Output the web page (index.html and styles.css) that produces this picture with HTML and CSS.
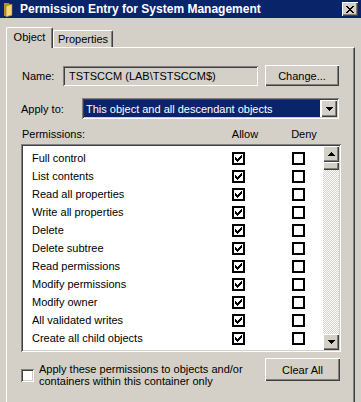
FILE: index.html
```html
<!DOCTYPE html>
<html>
<head>
<meta charset="utf-8">
<title>Permission Entry for System Management</title>
<link rel="stylesheet" href="styles.css">
</head>
<body>
<div class="win">
  <div class="titlebar">
    <svg class="ticon" width="12" height="15" viewBox="0 0 12 15">
      <path d="M1 1h5l1 2h2v11H1z" fill="#b8902c"/>
      <path d="M3 4l6-2v11l-6 2z" fill="#f4d878" stroke="#9a7420" stroke-width="0.6"/>
    </svg>
    <span class="ttext">Permission Entry for System Management</span>
    <div class="close">
      <svg width="8" height="7" viewBox="0 0 8 7" shape-rendering="crispEdges"><path d="M0 0h2v1H0z M6 0h2v1H6z M1 1h2v1H1z M5 1h2v1H5z M2 2h4v1H2z M3 3h2v1H3z M2 4h4v1H2z M1 5h2v1H1z M5 5h2v1H5z M0 6h2v1H0z M6 6h2v1H6z" fill="#000"/></svg>
    </div>
  </div>

  <div class="tabs">
    <div class="tab sel">Object</div>
    <div class="tab">Properties</div>
  </div>

  <div class="panel">
    <div class="name-row">
      <span class="name-lbl">Name:</span>
      <div class="field">TSTSCCM (LAB\TSTSCCM$)</div>
      <div class="btn change">Change...</div>
    </div>

    <div class="apply-row">
      <span class="apply-lbl">Apply to:</span>
      <div class="combo">
        <div class="combo-sel">This object and all descendant objects</div>
        <div class="combo-btn">
          <svg width="7" height="4" viewBox="0 0 7 4" shape-rendering="crispEdges"><path d="M0 0h7v1H0z M1 1h5v1H1z M2 2h3v1H2z M3 3h1v1H3z" fill="#000"/></svg>
        </div>
      </div>
    </div>

    <div class="perm-head">
      <span>Permissions:</span>
      <span class="ch">Allow</span>
      <span class="ch">Deny</span>
    </div>

    <div class="list">
      <div class="rows">
        <div class="prow"><span>Full control</span><svg class="cb" width="13" height="13" viewBox="0 0 13 13" shape-rendering="crispEdges"><rect x="1" y="1" width="11" height="11" fill="#fff" stroke="#000" stroke-width="2"/><path d="M9 3h1v1H9z M8 4h2v1H8z M3 5h1v1H3z M7 5h3v1H7z M3 6h2v1H3z M6 6h3v1H6z M3 7h5v1H3z M4 8h3v1H4z M5 9h1v1H5z" fill="#000"/></svg><svg class="cb" width="13" height="13" viewBox="0 0 13 13" shape-rendering="crispEdges"><rect x="1" y="1" width="11" height="11" fill="#fff" stroke="#000" stroke-width="2"/></svg></div>
        <div class="prow"><span>List contents</span><svg class="cb" width="13" height="13" viewBox="0 0 13 13" shape-rendering="crispEdges"><rect x="1" y="1" width="11" height="11" fill="#fff" stroke="#000" stroke-width="2"/><path d="M9 3h1v1H9z M8 4h2v1H8z M3 5h1v1H3z M7 5h3v1H7z M3 6h2v1H3z M6 6h3v1H6z M3 7h5v1H3z M4 8h3v1H4z M5 9h1v1H5z" fill="#000"/></svg><svg class="cb" width="13" height="13" viewBox="0 0 13 13" shape-rendering="crispEdges"><rect x="1" y="1" width="11" height="11" fill="#fff" stroke="#000" stroke-width="2"/></svg></div>
        <div class="prow"><span>Read all properties</span><svg class="cb" width="13" height="13" viewBox="0 0 13 13" shape-rendering="crispEdges"><rect x="1" y="1" width="11" height="11" fill="#fff" stroke="#000" stroke-width="2"/><path d="M9 3h1v1H9z M8 4h2v1H8z M3 5h1v1H3z M7 5h3v1H7z M3 6h2v1H3z M6 6h3v1H6z M3 7h5v1H3z M4 8h3v1H4z M5 9h1v1H5z" fill="#000"/></svg><svg class="cb" width="13" height="13" viewBox="0 0 13 13" shape-rendering="crispEdges"><rect x="1" y="1" width="11" height="11" fill="#fff" stroke="#000" stroke-width="2"/></svg></div>
        <div class="prow"><span>Write all properties</span><svg class="cb" width="13" height="13" viewBox="0 0 13 13" shape-rendering="crispEdges"><rect x="1" y="1" width="11" height="11" fill="#fff" stroke="#000" stroke-width="2"/><path d="M9 3h1v1H9z M8 4h2v1H8z M3 5h1v1H3z M7 5h3v1H7z M3 6h2v1H3z M6 6h3v1H6z M3 7h5v1H3z M4 8h3v1H4z M5 9h1v1H5z" fill="#000"/></svg><svg class="cb" width="13" height="13" viewBox="0 0 13 13" shape-rendering="crispEdges"><rect x="1" y="1" width="11" height="11" fill="#fff" stroke="#000" stroke-width="2"/></svg></div>
        <div class="prow"><span>Delete</span><svg class="cb" width="13" height="13" viewBox="0 0 13 13" shape-rendering="crispEdges"><rect x="1" y="1" width="11" height="11" fill="#fff" stroke="#000" stroke-width="2"/><path d="M9 3h1v1H9z M8 4h2v1H8z M3 5h1v1H3z M7 5h3v1H7z M3 6h2v1H3z M6 6h3v1H6z M3 7h5v1H3z M4 8h3v1H4z M5 9h1v1H5z" fill="#000"/></svg><svg class="cb" width="13" height="13" viewBox="0 0 13 13" shape-rendering="crispEdges"><rect x="1" y="1" width="11" height="11" fill="#fff" stroke="#000" stroke-width="2"/></svg></div>
        <div class="prow"><span>Delete subtree</span><svg class="cb" width="13" height="13" viewBox="0 0 13 13" shape-rendering="crispEdges"><rect x="1" y="1" width="11" height="11" fill="#fff" stroke="#000" stroke-width="2"/><path d="M9 3h1v1H9z M8 4h2v1H8z M3 5h1v1H3z M7 5h3v1H7z M3 6h2v1H3z M6 6h3v1H6z M3 7h5v1H3z M4 8h3v1H4z M5 9h1v1H5z" fill="#000"/></svg><svg class="cb" width="13" height="13" viewBox="0 0 13 13" shape-rendering="crispEdges"><rect x="1" y="1" width="11" height="11" fill="#fff" stroke="#000" stroke-width="2"/></svg></div>
        <div class="prow"><span>Read permissions</span><svg class="cb" width="13" height="13" viewBox="0 0 13 13" shape-rendering="crispEdges"><rect x="1" y="1" width="11" height="11" fill="#fff" stroke="#000" stroke-width="2"/><path d="M9 3h1v1H9z M8 4h2v1H8z M3 5h1v1H3z M7 5h3v1H7z M3 6h2v1H3z M6 6h3v1H6z M3 7h5v1H3z M4 8h3v1H4z M5 9h1v1H5z" fill="#000"/></svg><svg class="cb" width="13" height="13" viewBox="0 0 13 13" shape-rendering="crispEdges"><rect x="1" y="1" width="11" height="11" fill="#fff" stroke="#000" stroke-width="2"/></svg></div>
        <div class="prow"><span>Modify permissions</span><svg class="cb" width="13" height="13" viewBox="0 0 13 13" shape-rendering="crispEdges"><rect x="1" y="1" width="11" height="11" fill="#fff" stroke="#000" stroke-width="2"/><path d="M9 3h1v1H9z M8 4h2v1H8z M3 5h1v1H3z M7 5h3v1H7z M3 6h2v1H3z M6 6h3v1H6z M3 7h5v1H3z M4 8h3v1H4z M5 9h1v1H5z" fill="#000"/></svg><svg class="cb" width="13" height="13" viewBox="0 0 13 13" shape-rendering="crispEdges"><rect x="1" y="1" width="11" height="11" fill="#fff" stroke="#000" stroke-width="2"/></svg></div>
        <div class="prow"><span>Modify owner</span><svg class="cb" width="13" height="13" viewBox="0 0 13 13" shape-rendering="crispEdges"><rect x="1" y="1" width="11" height="11" fill="#fff" stroke="#000" stroke-width="2"/><path d="M9 3h1v1H9z M8 4h2v1H8z M3 5h1v1H3z M7 5h3v1H7z M3 6h2v1H3z M6 6h3v1H6z M3 7h5v1H3z M4 8h3v1H4z M5 9h1v1H5z" fill="#000"/></svg><svg class="cb" width="13" height="13" viewBox="0 0 13 13" shape-rendering="crispEdges"><rect x="1" y="1" width="11" height="11" fill="#fff" stroke="#000" stroke-width="2"/></svg></div>
        <div class="prow"><span>All validated writes</span><svg class="cb" width="13" height="13" viewBox="0 0 13 13" shape-rendering="crispEdges"><rect x="1" y="1" width="11" height="11" fill="#fff" stroke="#000" stroke-width="2"/><path d="M9 3h1v1H9z M8 4h2v1H8z M3 5h1v1H3z M7 5h3v1H7z M3 6h2v1H3z M6 6h3v1H6z M3 7h5v1H3z M4 8h3v1H4z M5 9h1v1H5z" fill="#000"/></svg><svg class="cb" width="13" height="13" viewBox="0 0 13 13" shape-rendering="crispEdges"><rect x="1" y="1" width="11" height="11" fill="#fff" stroke="#000" stroke-width="2"/></svg></div>
        <div class="prow"><span>Create all child objects</span><svg class="cb" width="13" height="13" viewBox="0 0 13 13" shape-rendering="crispEdges"><rect x="1" y="1" width="11" height="11" fill="#fff" stroke="#000" stroke-width="2"/><path d="M9 3h1v1H9z M8 4h2v1H8z M3 5h1v1H3z M7 5h3v1H7z M3 6h2v1H3z M6 6h3v1H6z M3 7h5v1H3z M4 8h3v1H4z M5 9h1v1H5z" fill="#000"/></svg><svg class="cb" width="13" height="13" viewBox="0 0 13 13" shape-rendering="crispEdges"><rect x="1" y="1" width="11" height="11" fill="#fff" stroke="#000" stroke-width="2"/></svg></div>
        <div class="prow"><span>Delete all child objects</span><svg class="cb" width="13" height="13" viewBox="0 0 13 13" shape-rendering="crispEdges"><rect x="1" y="1" width="11" height="11" fill="#fff" stroke="#000" stroke-width="2"/><path d="M9 3h1v1H9z M8 4h2v1H8z M3 5h1v1H3z M7 5h3v1H7z M3 6h2v1H3z M6 6h3v1H6z M3 7h5v1H3z M4 8h3v1H4z M5 9h1v1H5z" fill="#000"/></svg><svg class="cb" width="13" height="13" viewBox="0 0 13 13" shape-rendering="crispEdges"><rect x="1" y="1" width="11" height="11" fill="#fff" stroke="#000" stroke-width="2"/></svg></div>
      </div>
      <div class="sb">
        <div class="sbtn">
          <svg width="7" height="4" viewBox="0 0 7 4" shape-rendering="crispEdges"><path d="M3 0h1v1H3z M2 1h3v1H2z M1 2h5v1H1z M0 3h7v1H0z" fill="#000"/></svg>
        </div>
        <div class="thumb"></div>
        <div class="track"></div>
        <div class="sbtn">
          <svg width="7" height="4" viewBox="0 0 7 4" shape-rendering="crispEdges"><path d="M0 0h7v1H0z M1 1h5v1H1z M2 2h3v1H2z M3 3h1v1H3z" fill="#000"/></svg>
        </div>
      </div>
    </div>

    <div class="bottom">
      <div class="inherit">
        <div class="box3d"></div>
        <div class="inherit-text">Apply these permissions to objects and/or<br>containers within this container only</div>
      </div>
      <div class="btn clear">Clear All</div>
    </div>
  </div>
</div>
</body>
</html>
```

FILE: styles.css
```css
* {
  box-sizing: border-box;
  margin: 0;
  padding: 0;
}

html, body {
  width: 361px;
  height: 402px;
  overflow: hidden;
}

body {
  background: #d4d0c8;
  font-family: "Liberation Sans", Arial, sans-serif;
  font-size: 11px;
  color: #000;
}

.win {
  display: flex;
  flex-direction: column;
  height: 402px;
}

/* Title bar */
.titlebar {
  height: 18px;
  flex: none;
  background: #0a246a;
  display: flex;
  align-items: center;
  padding: 0 3px 0 3px;
}

.ticon {
  flex: none;
  display: block;
}

.ttext {
  flex: 1;
  color: #fff;
  font-weight: bold;
  font-size: 12px;
  margin-left: 5px;
  line-height: 18px;
  white-space: nowrap;
}

.close {
  width: 16px;
  height: 14px;
  flex: none;
  background: #d4d0c8;
  display: flex;
  align-items: center;
  justify-content: center;
  box-shadow: inset 1px 1px #fff, inset -1px -1px #404040, inset -2px -2px #808080;
}

.close svg {
  display: block;
}

/* Tabs */
.tabs {
  display: flex;
  align-items: flex-end;
  margin: 9px 0 0 6px;
  height: 20px;
  flex: none;
}

.tab {
  height: 17px;
  width: 60px;
  border-top: 1px solid #fff;
  border-left: 1px solid #fff;
  border-right: 1px solid #404040;
  box-shadow: inset -1px 0 #808080;
  border-radius: 2px 2px 0 0;
  display: flex;
  align-items: center;
  justify-content: center;
  padding-bottom: 1px;
  background: #d4d0c8;
}

.tab.sel {
  width: 47px;
  height: 21px;
  margin-bottom: -1px;
  position: relative;
  z-index: 1;
  padding-bottom: 3px;
}

/* Panel */
.panel {
  flex: 1;
  margin: 0 6px 0 6px;
  border-top: 1px solid #fff;
  border-left: 1px solid #fff;
  border-right: 1px solid #404040;
  box-shadow: inset -1px 0 #808080;
  padding: 17px 0 0 14px;
  display: flex;
  flex-direction: column;
}

.name-row {
  display: flex;
  align-items: center;
  height: 21px;
}

.name-lbl {
  width: 42px;
  padding-left: 1px;
}

.field {
  width: 195px;
  height: 20px;
  margin-top: 1px;
  padding-left: 6px;
  display: flex;
  align-items: center;
  box-shadow: inset 1px 1px #808080, inset -1px -1px #fff, inset 2px 2px #404040, inset -2px -2px #d4d0c8;
}

.btn {
  background: #d4d0c8;
  display: flex;
  align-items: center;
  justify-content: center;
  box-shadow: inset 1px 1px #fff, inset -1px -1px #404040, inset -2px -2px #808080;
}

.change {
  width: 74px;
  height: 21px;
  margin-left: 7px;
}

.apply-row {
  display: flex;
  align-items: center;
  margin-top: 12px;
  height: 21px;
}

.apply-lbl {
  width: 61px;
}

.combo {
  width: 257px;
  height: 21px;
  padding: 2px;
  display: flex;
  background: #fff;
  box-shadow: inset 1px 1px #808080, inset -1px -1px #fff, inset 2px 2px #404040, inset -2px -2px #d4d0c8;
}

.combo-sel {
  flex: 1;
  background: #0a246a;
  color: #fff;
  padding-left: 2px;
  display: flex;
  align-items: center;
  white-space: nowrap;
  margin-right: 1px;
}

.combo-btn {
  width: 16px;
  height: 17px;
  background: #d4d0c8;
  display: flex;
  align-items: center;
  justify-content: center;
  box-shadow: inset 1px 1px #fff, inset -1px -1px #404040, inset -2px -2px #808080;
}

.combo-btn svg, .sbtn svg {
  display: block;
}

.perm-head {
  display: grid;
  grid-template-columns: 190px 52px 52px;
  column-gap: 7px;
  margin-top: 8px;
  height: 14px;
  line-height: 14px;
  padding-left: 1px;
}

.ch {
  text-align: center;
}

/* List */
.list {
  margin-top: 3px;
  width: 320px;
  height: 208px;
  padding: 2px;
  display: flex;
  background: #fff;
  box-shadow: inset 1px 1px #808080, inset -1px -1px #fff, inset 2px 2px #404040, inset -2px -2px #d4d0c8;
}

.rows {
  flex: 1;
  overflow: hidden;
  padding: 3px 0 0 9px;
}

.prow {
  height: 18px;
  display: grid;
  grid-template-columns: 200px 13px 47px 13px;
  align-items: center;
  white-space: nowrap;
}

.cb {
  display: block;
}

.prow .cb:last-child {
  grid-column: 4;
}

.sb {
  width: 16px;
  display: flex;
  flex-direction: column;
}

.sbtn {
  width: 16px;
  height: 16px;
  flex: none;
  background: #d4d0c8;
  display: flex;
  align-items: center;
  justify-content: center;
  box-shadow: inset 1px 1px #fff, inset -1px -1px #404040, inset -2px -2px #808080;
}

.thumb {
  height: 8px;
  flex: none;
  background: #d4d0c8;
  box-shadow: inset 1px 1px #fff, inset -1px -1px #404040, inset -2px -2px #808080;
}

.track {
  flex: 1;
  background: repeating-conic-gradient(#fff 0 25%, #d4d0c8 0 50%) 0 0 / 2px 2px;
}

/* Bottom */
.bottom {
  display: flex;
  align-items: flex-start;
  margin-top: 6px;
  width: 319px;
}

.inherit {
  display: flex;
  align-items: center;
  margin-top: 5px;
}

.box3d {
  width: 13px;
  height: 13px;
  flex: none;
  background: #fff;
  box-shadow: inset 1px 1px #808080, inset -1px -1px #fff, inset 2px 2px #404040, inset -2px -2px #d4d0c8;
}

.inherit-text {
  margin-left: 5px;
  line-height: 12px;
  white-space: nowrap;
}

.clear {
  margin-left: auto;
  width: 75px;
  height: 23px;
}
```
